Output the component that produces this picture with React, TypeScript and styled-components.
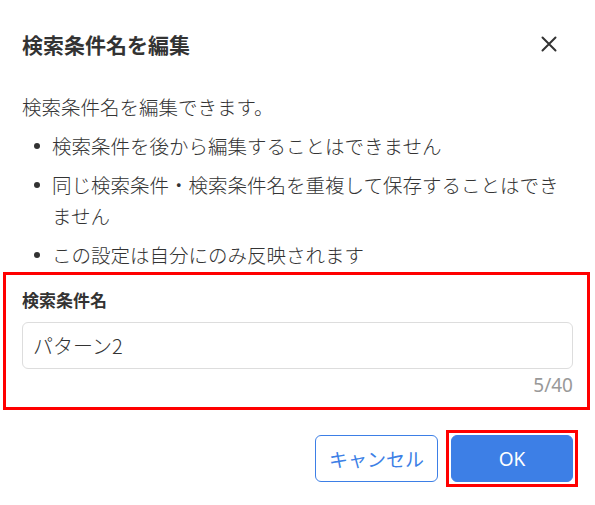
import React from 'react';
import styled, { createGlobalStyle } from 'styled-components';

const GlobalStyle = createGlobalStyle`
  html, body {
    margin: 0;
    padding: 0;
    background: #ffffff;
  }

  body {
    font-family: "Noto Sans CJK JP", "Noto Sans", sans-serif;
    color: #333333;
  }
`;

const notes: string[] = [
  '検索条件を後から編集することはできません',
  '同じ検索条件・検索条件名を重複して保存することはできません',
  'この設定は自分にのみ反映されます',
];

const App: React.FC = () => {
  const value = 'パターン2';
  const maxLength = 40;

  return (
    <>
      <GlobalStyle />
      <Dialog>
        <Header>
          <Title>検索条件名を編集</Title>
          <CloseButton aria-label="閉じる">
            <svg width="16" height="16" viewBox="0 0 16 16">
              <path
                d="M1.5 1.5 L14.5 14.5 M14.5 1.5 L1.5 14.5"
                stroke="#333333"
                strokeWidth="2"
                strokeLinecap="round"
              />
            </svg>
          </CloseButton>
        </Header>

        <Description>
          <Lead>検索条件名を編集できます。</Lead>
          <NoteList>
            {notes.map((note) => (
              <Note key={note}>{note}</Note>
            ))}
          </NoteList>
        </Description>

        <FieldSection>
          <Label htmlFor="condition-name">検索条件名</Label>
          <Input id="condition-name" defaultValue={value} maxLength={maxLength} />
          <Counter>
            {value.length}/{maxLength}
          </Counter>
        </FieldSection>

        <Footer>
          <Button>キャンセル</Button>
          <Highlight>
            <Button primary>OK</Button>
          </Highlight>
        </Footer>
      </Dialog>
    </>
  );
};

export default App;

const Dialog = styled.div`
  width: 595px;
  height: 505px;
  box-sizing: border-box;
  padding: 28px 22px 0;
  display: flex;
  flex-direction: column;
`;

const Header = styled.div`
  display: flex;
  align-items: center;
  justify-content: space-between;
  height: 32px;
`;

const Title = styled.h2`
  margin: 0;
  font-size: 21px;
  line-height: 32px;
  font-weight: 700;
  color: #333333;
`;

const CloseButton = styled.button`
  display: flex;
  align-items: center;
  justify-content: center;
  width: 24px;
  height: 24px;
  margin-right: 12px;
  padding: 0;
  border: none;
  background: transparent;
  cursor: pointer;
`;

const Description = styled.div`
  margin-top: 31px;
  font-size: 19.5px;
  line-height: 31px;
  font-weight: 300;
`;

const Lead = styled.p`
  margin: 0;
`;

const NoteList = styled.ul`
  margin: 0;
  padding: 0;
  list-style: none;
`;

const Note = styled.li`
  position: relative;
  margin-top: 8px;
  padding-left: 30px;

  &::before {
    content: '';
    position: absolute;
    left: 12px;
    top: 13px;
    width: 6px;
    height: 6px;
    border-radius: 50%;
    background: #333333;
  }
`;

const FieldSection = styled.section`
  margin: 2px -17px 0 -19px;
  padding: 13px 14px 10px 16px;
  border: 3px solid #ff0000;
  display: flex;
  flex-direction: column;
`;

const Label = styled.label`
  font-size: 17px;
  line-height: 24px;
  font-weight: 700;
  color: #333333;
`;

const Input = styled.input`
  margin-top: 10px;
  height: 47px;
  box-sizing: border-box;
  padding: 0 10px;
  border: 1px solid #dddddd;
  border-radius: 6px;
  font-family: "Noto Sans CJK JP", "Noto Sans", sans-serif;
  font-size: 20px;
  font-weight: 300;
  color: #333333;
  outline: none;
`;

const Counter = styled.div`
  margin-top: 4px;
  text-align: right;
  font-family: "Noto Sans", "Noto Sans CJK JP", sans-serif;
  font-size: 19px;
  line-height: 24px;
  color: #999999;
`;

const Footer = styled.div`
  display: flex;
  justify-content: flex-end;
  align-items: center;
  gap: 8px;
  margin-top: 20px;
  margin-right: -5px;
`;

const Highlight = styled.div`
  padding: 2px;
  border: 3px solid #ff0000;
  display: flex;
`;

const Button = styled.button<{ primary?: boolean }>`
  width: ${({ primary }) => (primary ? '122px' : '123px')};
  height: 47px;
  box-sizing: border-box;
  border-radius: 6px;
  border: 1px solid #3d7fe6;
  background: ${({ primary }) => (primary ? '#3d7fe6' : '#ffffff')};
  color: ${({ primary }) => (primary ? '#ffffff' : '#3d7fe6')};
  font-family: "Noto Sans", "Noto Sans CJK JP", sans-serif;
  font-size: 19px;
  cursor: pointer;
  padding: 0;
`;
